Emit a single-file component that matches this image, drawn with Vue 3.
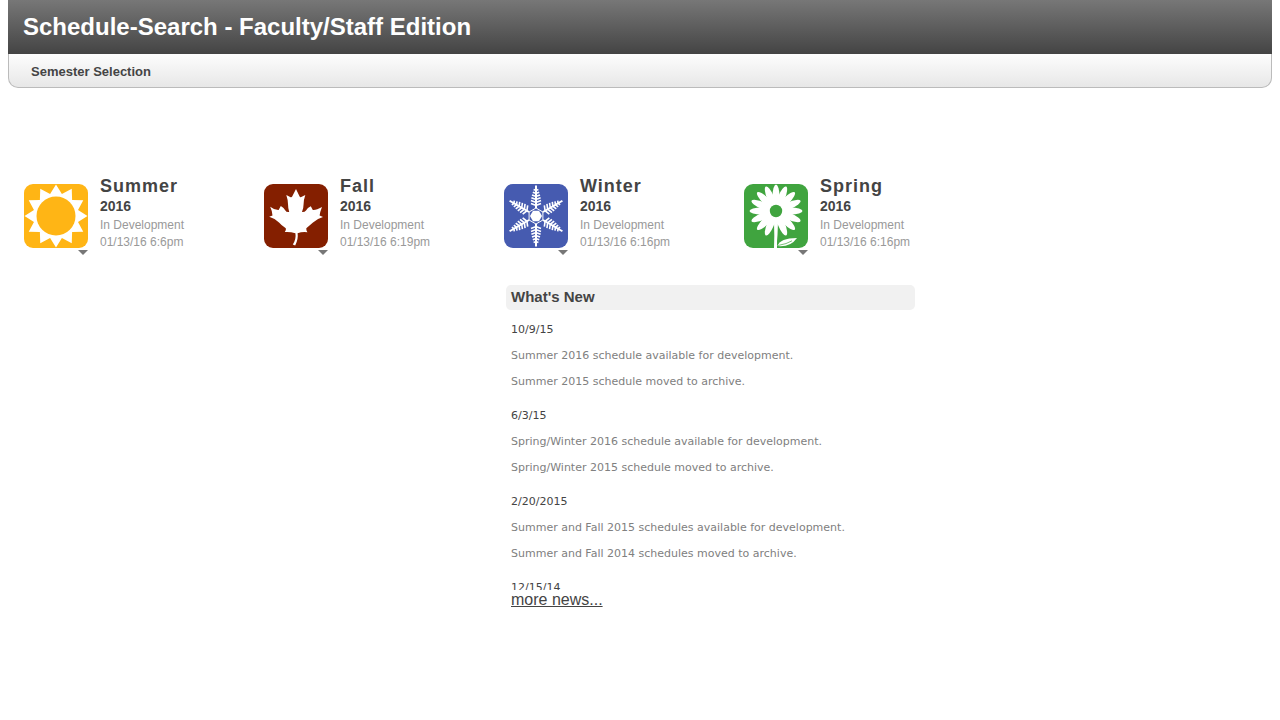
<script setup>
const semesters = [
  { name: 'Summer', year: '2016', status: 'In Development', updated: '01/13/16 6:6pm', icon: 'sun', color: '#ffb515' },
  { name: 'Fall', year: '2016', status: 'In Development', updated: '01/13/16 6:19pm', icon: 'leaf', color: '#841f00' },
  { name: 'Winter', year: '2016', status: 'In Development', updated: '01/13/16 6:16pm', icon: 'snow', color: '#465bb0' },
  { name: 'Spring', year: '2016', status: 'In Development', updated: '01/13/16 6:16pm', icon: 'flower', color: '#40a43f' },
]

const news = [
  { date: '10/9/15', items: ['Summer 2016 schedule available for development.', 'Summer 2015 schedule moved to archive.'] },
  { date: '6/3/15', items: ['Spring/Winter 2016 schedule available for development.', 'Spring/Winter 2015 schedule moved to archive.'] },
  { date: '2/20/2015', items: ['Summer and Fall 2015 schedules available for development.', 'Summer and Fall 2014 schedules moved to archive.'] },
  { date: '12/15/14', items: [] },
]

// Twelve-pointed star behind the sun disc
const sunRays = Array.from({ length: 24 }, (_, i) => {
  const r = i % 2 ? 22.8 : 31.5
  const a = (i * 15 * Math.PI) / 180
  return `${(32 + r * Math.sin(a)).toFixed(2)},${(32 - r * Math.cos(a)).toFixed(2)}`
}).join(' ')

// One arm of the snowflake, pointing up, with paired side needles
const needles = [[21.5, 5], [18.5, 5], [15.5, 4.6], [12.5, 4], [9.5, 3.2], [6.5, 2.4]]
const snowNeedles = needles.map(([y, w]) => `M${32 - w} ${y - w * 0.4}L32 ${y}L${32 + w} ${y - w * 0.4}`).join('')
const petals = Array.from({ length: 16 }, (_, i) => i * 22.5).filter((a) => a !== 180)
</script>

<template>
  <div class="page">
    <header>
      <h1>Schedule-Search - Faculty/Staff Edition</h1>
      <nav aria-label="Section">Semester Selection</nav>
    </header>

    <main>
      <section v-for="s in semesters" :key="s.name" class="semester">
        <div class="tile">
          <a href="#" :aria-label="`${s.name} ${s.year}`">
            <svg viewBox="0 0 64 64" width="64" height="64" aria-hidden="true">
              <rect width="64" height="64" rx="9" :fill="s.color" />
              <template v-if="s.icon === 'sun'">
                <polygon :points="sunRays" fill="#fff" />
                <circle cx="32" cy="32" r="20.5" fill="#fff" />
                <circle cx="32" cy="32" r="19.5" :fill="s.color" />
              </template>
              <template v-else-if="s.icon === 'leaf'">
                <path fill="#fff" d="M32 5L35.6 12.5Q36.2 13.6 37.3 13L41.3 11Q39.6 16 39.6 20Q39.6 24 38 28Q40.5 28.4 42 26.4Q43.5 23.5 46.8 22.2L48.8 26Q52 26.5 58 23Q56 28 55.6 31.5L59 33Q53.5 34.5 49 38.5Q46.5 40.7 42.3 44.2Q42 46 43.4 48.2Q38 47.5 33.6 49.3Q34.5 55 31.2 61.6L28.8 60.6Q32.4 55 31.4 49.3Q26 47.5 20.8 48Q22.4 46 21.8 44.2Q17.5 41.5 15 38.5Q11 34.5 5.2 32.8L8.5 31.5Q8.2 27 6.2 22.8Q10.5 26.2 14.6 26L16.8 22Q20 23.8 21.2 26.2Q22.2 28.4 25.2 28Q24 24 24 20Q24 16 22.3 11L26.6 13.2Q27.7 13.6 28.2 12.5Z" />
              </template>
              <template v-else-if="s.icon === 'snow'">
                <g fill="none" stroke="#fff">
                  <g v-for="n in 6" :key="n" :transform="`rotate(${n * 60} 32 32)`">
                    <path d="M32 24V1.5" stroke-width="2" />
                    <path :d="snowNeedles" stroke-width="1.6" />
                  </g>
                  <path d="M32 24L38.9 28V36L32 40L25.1 36V28Z" stroke-width="1" />
                </g>
                <path fill="#fff" d="M29 26.8H35L38 32L35 37.2H29L26 32Z" />
              </template>
              <template v-else>
                <ellipse v-for="a in petals" :key="a" fill="#fff" cx="32" cy="12.5" rx="3.5" ry="12" :transform="`rotate(${a} 32 27)`" />
                <circle cx="32" cy="27" r="13" fill="#fff" />
                <circle cx="32" cy="27" r="6.2" :fill="s.color" />
                <path fill="#fff" d="M30 38H34L33.5 51Q32.8 57 33 64H30Q30.6 52 30 38Z" />
                <path fill="#fff" d="M33.5 62Q36 54 53 54Q47 62.5 36 62.3Z" />
                <path fill="none" :stroke="s.color" stroke-width="0.7" d="M34 61.5Q43 60 48 56.8" />
              </template>
            </svg>
          </a>
          <button type="button" class="caret" :aria-label="`${s.name} options`">
            <svg viewBox="0 0 10 5" width="10" height="5" aria-hidden="true"><path d="M0 0H10L5 5Z" fill="#777" /></svg>
          </button>
        </div>
        <div class="info">
          <h2>{{ s.name }}</h2>
          <p class="year">{{ s.year }}</p>
          <p class="meta">{{ s.status }}</p>
          <p class="meta">{{ s.updated }}</p>
        </div>
      </section>

      <section class="news">
        <h2>What's New</h2>
        <div class="feed">
          <article v-for="n in news" :key="n.date">
            <h3>{{ n.date }}</h3>
            <p v-for="item in n.items" :key="item">{{ item }}</p>
          </article>
        </div>
        <a href="#" class="more">more news...</a>
      </section>
    </main>
  </div>
</template>

<style>
body {
  background: #fff;
}
</style>

<style scoped>
.page {
  padding: 0 8px;
  color: #444;
  font-family: Arial, "Liberation Sans", sans-serif;
}
h1, h2, h3, p {
  margin: 0;
}
h1 {
  padding: 0 15px;
  font-size: 24px;
  line-height: 54px;
  color: #fff;
  background: linear-gradient(#777, #444);
}
nav {
  padding: 2px 22px 0;
  font-size: 13px;
  font-weight: bold;
  line-height: 31px;
  border: 1px solid #bbb;
  border-top: 0;
  border-radius: 0 0 10px 10px;
  background: linear-gradient(#fdfdfd, #e7e7e7);
}
main {
  display: grid;
  grid-template-columns: repeat(4, minmax(0, 240px));
  row-gap: 30px;
  padding: 88px 16px 0;
}
.semester {
  display: flex;
  gap: 12px;
}
.tile {
  display: flex;
  flex-direction: column;
  align-items: flex-end;
  gap: 2px;
  padding-top: 8px;
}
.tile svg {
  display: block;
}
.caret {
  padding: 0;
  border: 0;
  background: none;
  cursor: pointer;
}
.info h2 {
  font-size: 18px;
  line-height: 20px;
  letter-spacing: 1px;
}
.year {
  margin-bottom: 1px;
  font-size: 14px;
  font-weight: bold;
  line-height: 20px;
}
.meta {
  font-size: 12px;
  line-height: 17px;
  color: #999;
}
.news {
  grid-column: 3 / span 2;
  max-width: 409px;
  margin-left: 2px;
}
.news h2 {
  padding: 0 5px 1px;
  font-size: 15px;
  line-height: 24px;
  background: #f1f1f1;
  border-radius: 5px;
}
.feed {
  box-sizing: border-box;
  height: 280px;
  overflow: hidden;
  padding: 1px 5px 0;
  font-family: Verdana, "DejaVu Sans", sans-serif;
  font-size: 11px;
  line-height: 26px;
}
.feed article {
  padding-top: 6px;
  margin-bottom: 2px;
}
.feed h3 {
  font-size: 11px;
  font-weight: normal;
}
.feed p {
  color: #808080;
}
.more {
  display: block;
  width: fit-content;
  margin-left: 5px;
  font-size: 16px;
  line-height: 20px;
  color: #444;
}
</style>
